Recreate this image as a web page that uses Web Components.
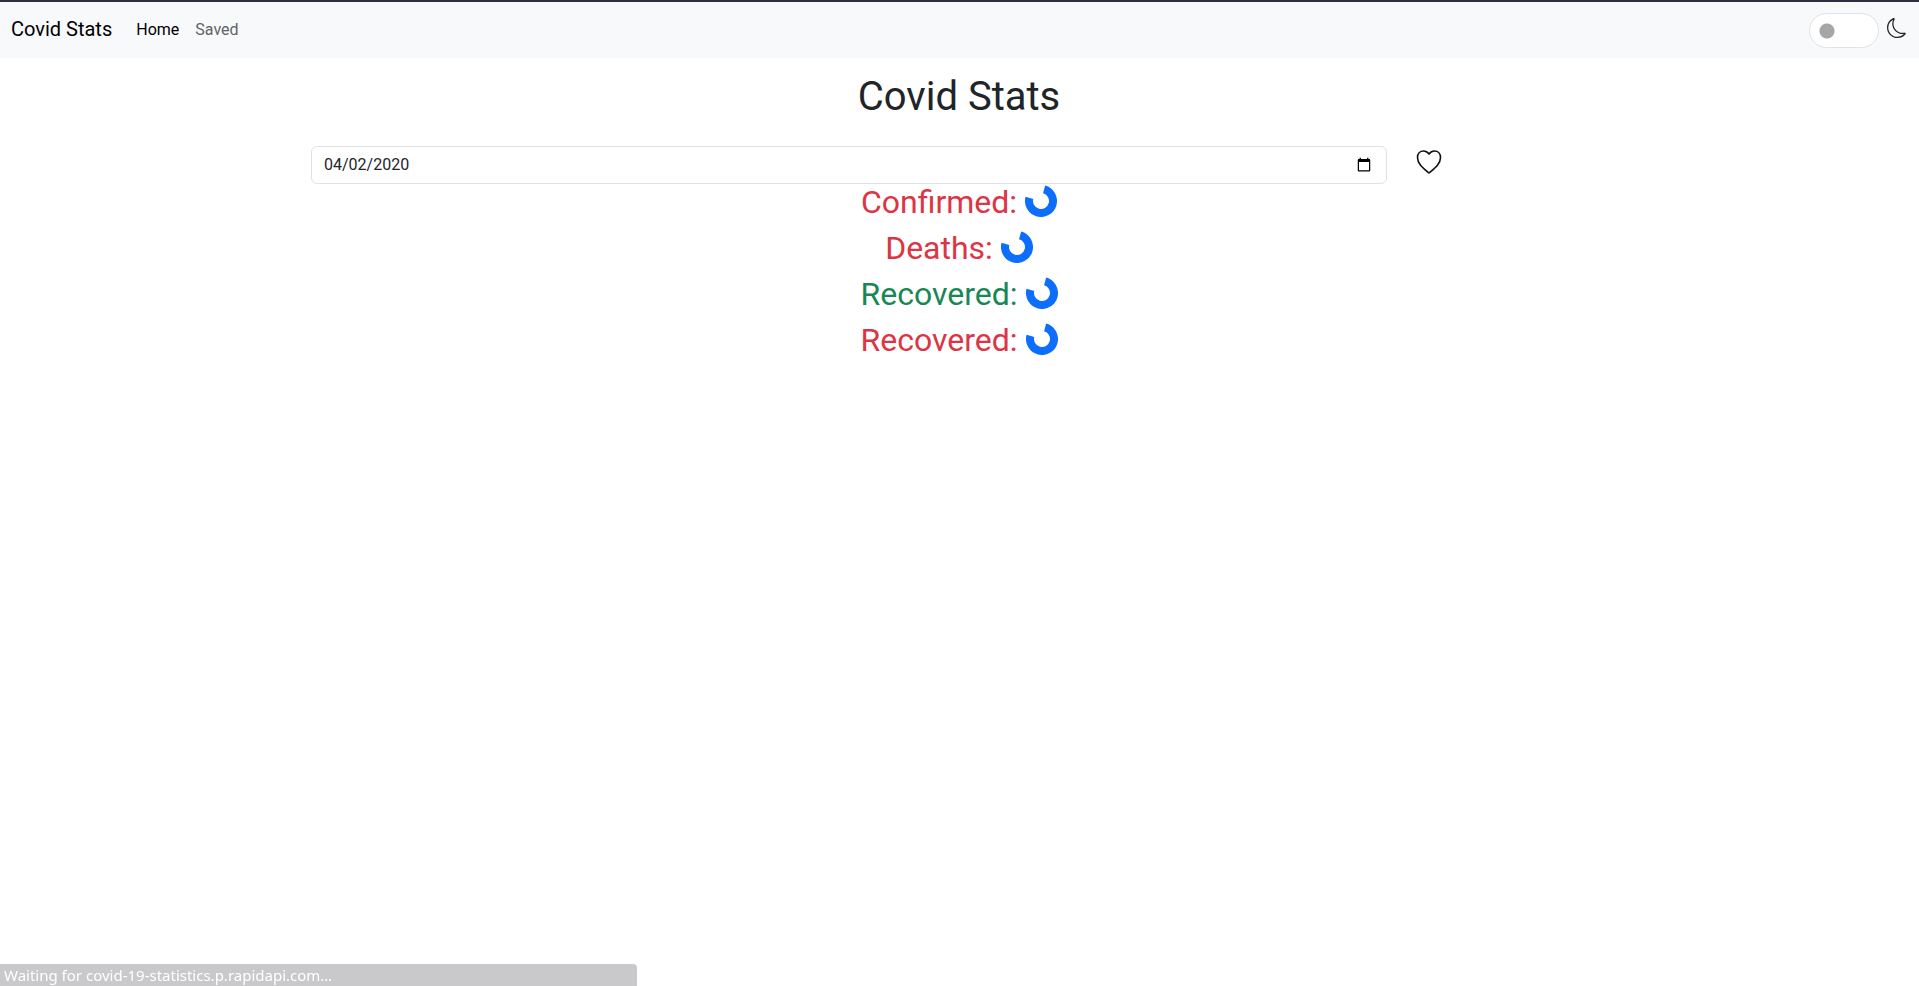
<!DOCTYPE html>
<html lang="en">
<head>
<meta charset="utf-8">
<title>Covid Stats</title>
<style>
html,body{margin:0;height:100%}
body{font:16px/24px Roboto,sans-serif;color:#212529;background:#fff}
</style>
</head>
<body>
<covid-app></covid-app>
<script>
const define = (name, html) => {
  const template = document.createElement('template');
  template.innerHTML = html;
  customElements.define(name, class extends HTMLElement {
    constructor() {
      super();
      this.attachShadow({mode: 'open'}).append(template.content.cloneNode(true));
    }
  });
};

define('theme-switch', `
<style>
:host{display:flex;align-items:center;gap:8px}
input{appearance:none;box-sizing:border-box;width:70px;height:35px;margin:0;border:1px solid #dee2e6;border-radius:18px;
  background:#fff radial-gradient(circle at 17px 17px,#a6a6a6 7px,transparent 8px)}
input:checked{background:#0d6efd radial-gradient(circle at 50px 17px,#fff 7px,transparent 8px)}
svg{display:block;width:20px;height:20px;margin-bottom:4px}
</style>
<input type="checkbox" role="switch" aria-label="Dark mode">
<svg viewBox="0 0 16 16" fill="#212529" aria-hidden="true"><path d="M6 .278a.77.77 0 0 1 .08.858 7.2 7.2 0 0 0-.878 3.46c0 4.021 3.278 7.277 7.318 7.277q.792-.001 1.533-.16a.79.79 0 0 1 .81.316.73.73 0 0 1-.031.893A8.35 8.35 0 0 1 8.344 16C3.734 16 0 12.286 0 7.71 0 4.266 2.114 1.312 5.124.06A.75.75 0 0 1 6 .278M4.858 1.311A7.27 7.27 0 0 0 1.025 7.71c0 4.02 3.279 7.276 7.319 7.276a7.32 7.32 0 0 0 5.205-2.162q-.506.063-1.029.063c-4.61 0-8.343-3.714-8.343-8.29 0-1.167.242-2.278.681-3.286"/></svg>`);

define('nav-bar', `
<style>
:host{display:block;border-top:2px solid #2f2f41;background:#f8f9fb}
nav{display:flex;align-items:center;height:56px;padding:0 12px 0 11px}
a{text-decoration:none;color:#000}
.brand{font-size:20px;line-height:30px;margin-right:16px;padding-bottom:2px}
.link{padding:8px}
.muted{color:#626365}
theme-switch{margin-left:auto}
</style>
<nav>
<a class="brand" href="#">Covid Stats</a>
<a class="link" href="#home" aria-current="page">Home</a>
<a class="link muted" href="#saved">Saved</a>
<theme-switch></theme-switch>
</nav>`);

define('date-picker', `
<style>
:host{display:grid;grid-template-columns:10fr 2fr;align-items:start}
.field{padding:0 12px}
input{box-sizing:border-box;display:block;width:100%;height:38px;padding:6px 12px;border:1px solid #dee2e6;border-radius:6px;background:#fff;color:#212529;font:inherit}
input::-webkit-datetime-edit{padding:0}
input::-webkit-datetime-edit-month-field,input::-webkit-datetime-edit-day-field,input::-webkit-datetime-edit-year-field{padding:0}
button{display:block;margin:0 0 0 13px;padding:4px;border:0;background:none}
svg{display:block;width:26px;height:24px}
</style>
<div class="field"><input type="date" value="2020-04-02" aria-label="Date"></div>
<button type="button" aria-label="Save date"><svg viewBox="0 0 26 24" fill="none" stroke="#111" stroke-width="1.6" stroke-linejoin="round" aria-hidden="true"><path d="M13 4C11.500 2 9.500 1 7.500 1C4 1 1.500 3.600 1.500 7.500C1.500 14 7 18 13 23C19 18 24.500 14 24.500 7.500C24.500 3.600 22 1 18.500 1C16.500 1 14.500 2 13 4Z"/></svg></button>`);

define('load-spinner', `
<style>
:host{display:block;width:32px;height:32px}
svg{display:block}
</style>
<svg width="32" height="32" viewBox="0 0 32 32" role="img" aria-label="Loading"><circle cx="16" cy="16" r="12" fill="none" stroke="#0d6efd" stroke-width="8" pathLength="360" stroke-dasharray="270 90" transform="rotate(-75 16 16)"/></svg>`);

define('stat-line', `
<style>
:host{display:block;color:#dc3545}
:host([tone=good]){color:#198754}
h2{display:flex;justify-content:center;gap:8px;margin:0;font-size:32px;font-weight:400;line-height:36px}
load-spinner{margin-top:1px}
</style>
<h2><slot></slot><load-spinner></load-spinner></h2>`);

define('status-bar', `
<style>
:host{display:block;position:fixed;left:0;bottom:0;box-sizing:border-box;width:33.2%;height:22px;padding:0 4px;border-radius:0 4px 0 0;background:#c9c9cb;color:#fff;font:15px/22px "Noto Sans",sans-serif;white-space:nowrap}
</style>
<slot></slot>`);

define('covid-app', `
<style>
:host{display:block}
main{max-width:1320px;margin:0 auto;padding:15px 1px 0 0}
h1{margin:0 0 25px;font-size:40px;font-weight:400;line-height:48px;text-align:center}
.stats{display:grid;gap:10px}
</style>
<nav-bar></nav-bar>
<main>
<h1>Covid Stats</h1>
<date-picker></date-picker>
<div class="stats">
<stat-line>Confirmed:</stat-line>
<stat-line>Deaths:</stat-line>
<stat-line tone="good">Recovered:</stat-line>
<stat-line>Recovered:</stat-line>
</div>
</main>
<status-bar role="status">Waiting for covid-19-statistics.p.rapidapi.com…</status-bar>`);
</script>
</body>
</html>
